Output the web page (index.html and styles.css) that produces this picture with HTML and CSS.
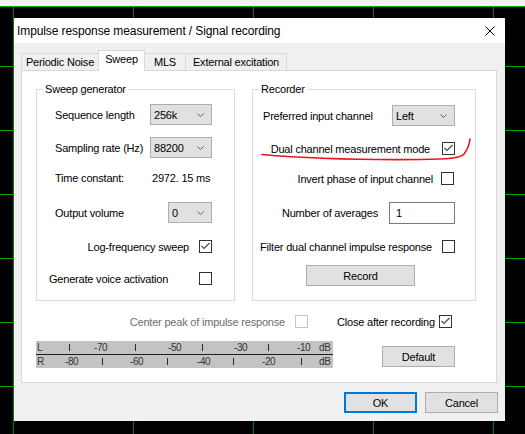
FILE: index.html
```html
<!DOCTYPE html>
<html>
<head>
<meta charset="utf-8">
<link rel="stylesheet" href="styles.css">
</head>
<body>
<div class="strip"></div>
<div class="desk">
  <div class="dialog">
    <div class="titlebar">
      <span class="title">Impulse response measurement / Signal recording</span>
      <svg class="close" width="10" height="10" viewBox="0 0 10 10"><path d="M0.5 0.5 L9.5 9.5 M9.5 0.5 L0.5 9.5" stroke="#000" stroke-width="1" fill="none"/></svg>
    </div>
    <div class="tabs">
      <div class="tab t1">Periodic Noise</div>
      <div class="tab sel t2">Sweep</div>
      <div class="tab t3">MLS</div>
      <div class="tab t4">External excitation</div>
    </div>
    <div class="panel">
      <div class="groups">
        <div class="group gen">
          <span class="legend">Sweep generator</span>
          <div class="row">
            <span>Sequence length</span>
            <div class="select w62"><span>256k</span><svg class="chev" width="7" height="4" viewBox="0 0 7 4"><polyline points="0.5,0.5 3.5,3.5 6.5,0.5" fill="none" stroke="#606060" stroke-width="1"/></svg></div>
          </div>
          <div class="row mt12">
            <span>Sampling rate (Hz)</span>
            <div class="select w62"><span>88200</span><svg class="chev" width="7" height="4" viewBox="0 0 7 4"><polyline points="0.5,0.5 3.5,3.5 6.5,0.5" fill="none" stroke="#606060" stroke-width="1"/></svg></div>
          </div>
          <div class="row mt9">
            <span>Time constant:</span>
            <span class="value">2972. 15 ms</span>
          </div>
          <div class="row mt14">
            <span>Output volume</span>
            <div class="select w44"><span>0</span><svg class="chev" width="7" height="4" viewBox="0 0 7 4"><polyline points="0.5,0.5 3.5,3.5 6.5,0.5" fill="none" stroke="#606060" stroke-width="1"/></svg></div>
          </div>
          <div class="row end mt13">
            <span>Log-frequency sweep</span>
            <span class="cb g10"><svg width="11" height="11" viewBox="0 0 11 11"><polyline points="1.5,5 4,7.5 9.5,2" fill="none" stroke="#444" stroke-width="1.1"/></svg></span>
          </div>
          <div class="row spread mt11 outdent">
            <span>Generate voice activation</span>
            <span class="cb"></span>
          </div>
        </div>
        <div class="group rec">
          <span class="legend">Recorder</span>
          <div class="row">
            <span>Preferred input channel</span>
            <div class="select w63"><span>Left</span><svg class="chev" width="7" height="4" viewBox="0 0 7 4"><polyline points="0.5,0.5 3.5,3.5 6.5,0.5" fill="none" stroke="#606060" stroke-width="1"/></svg></div>
          </div>
          <div class="row end mt12">
            <span>Dual channel measurement mode</span>
            <span class="cb g12"><svg width="11" height="11" viewBox="0 0 11 11"><polyline points="1.5,5 4,7.5 9.5,2" fill="none" stroke="#444" stroke-width="1.1"/></svg></span>
          </div>
          <div class="row end mt9">
            <span>Invert phase of input channel</span>
            <span class="cb g8 nudge"></span>
          </div>
          <div class="row end tall mt13">
            <span>Number of averages</span>
            <div class="num g11">1</div>
          </div>
          <div class="row end mt12">
            <span>Filter dual channel impulse response</span>
            <span class="cb g10"></span>
          </div>
          <div class="row mt8">
            <button class="btn record">Record</button>
          </div>
        </div>
      </div>
      <div class="bottomrow">
        <div class="centerpeak">
          <span>Center peak of impulse response</span>
          <span class="cb disabled g10"></span>
        </div>
        <div class="closeafter">
          <span>Close after recording</span>
          <span class="cb g4"><svg width="11" height="11" viewBox="0 0 11 11"><polyline points="1.5,5 4,7.5 9.5,2" fill="none" stroke="#444" stroke-width="1.1"/></svg></span>
        </div>
      </div>
      <div class="meterrow">
        <div class="meter">
          <div class="mrow">
            <span class="ml" style="left:1px">L</span>
            <span class="tick" style="left:33px"></span>
            <span class="ml" style="left:58px">-70</span>
            <span class="tick" style="left:99px"></span>
            <span class="ml" style="left:132px">-50</span>
            <span class="tick" style="left:166px"></span>
            <span class="ml" style="left:198px">-30</span>
            <span class="tick" style="left:232px"></span>
            <span class="ml" style="left:261px">-10</span>
            <span class="ml" style="left:283px">dB</span>
          </div>
          <div class="mrow">
            <span class="ml" style="left:1px">R</span>
            <span class="ml" style="left:29px">-80</span>
            <span class="tick" style="left:66px"></span>
            <span class="ml" style="left:94px">-60</span>
            <span class="tick" style="left:131px"></span>
            <span class="ml" style="left:161px">-40</span>
            <span class="tick" style="left:197px"></span>
            <span class="ml" style="left:226px">-20</span>
            <span class="tick" style="left:265px"></span>
            <span class="ml" style="left:283px">dB</span>
          </div>
        </div>
        <button class="btn default">Default</button>
      </div>
    </div>
    <div class="actions">
      <button class="btn ok">OK</button>
      <button class="btn cancel">Cancel</button>
    </div>
  </div>
</div>
<svg class="annot" width="525" height="434" viewBox="0 0 525 434">
  <path d="M262 154.5 C300 158 360 160 420 159.5 C448 159 460 158.5 464 154 C468 149 469.5 144 470 139" fill="none" stroke="#e8141a" stroke-width="1.6" stroke-linecap="round"/>
</svg>
</body>
</html>
```

FILE: styles.css
```css
html, body {
  margin: 0;
  padding: 0;
}

body {
  position: relative;
  width: 525px;
  height: 434px;
  overflow: hidden;
  background: #000;
  font-family: "Liberation Sans", Arial, sans-serif;
  font-size: 11px;
  letter-spacing: -0.2px;
  color: #000;
}

.strip {
  height: 6px;
  background: #f0f0f0;
}

.desk {
  height: 428px;
  box-sizing: border-box;
  padding: 12px 0 0 14px;
  background-color: #000;
  background-image:
    linear-gradient(#00a800, #00a800),
    linear-gradient(to bottom, #00a800 1px, transparent 1px),
    linear-gradient(to right, #0a780a 1px, transparent 1px);
  background-size: 100% 1px, 100% 64px, 120px 100%;
  background-position: 0 0, 0 60px, 13px 0;
  background-repeat: no-repeat, repeat, repeat;
}

.dialog {
  width: 491px;
  height: 403px;
  background: #f0f0f0;
  display: flex;
  flex-direction: column;
}

.titlebar {
  height: 25px;
  flex: none;
  box-sizing: border-box;
  background: #fff;
  display: flex;
  align-items: center;
  justify-content: space-between;
  padding: 0 10px 0 3px;
  font-size: 12px;
  letter-spacing: -0.1px;
}

.close {
  display: block;
}

.tabs {
  display: flex;
  align-items: flex-end;
  height: 20px;
  margin: 7px 0 0 7px;
}

.tab {
  box-sizing: border-box;
  height: 17px;
  border: 1px solid #d9d9d9;
  border-bottom: none;
  background: #f0f0f0;
  text-align: center;
  line-height: 16px;
  margin-left: -1px;
  white-space: nowrap;
}

.tab.t1 { margin-left: 0; width: 78px; }
.tab.t2 { width: 47px; }
.tab.t3 { width: 42px; }
.tab.t4 { width: 102px; }

.tab.sel {
  height: 21px;
  background: #fff;
  margin-bottom: -1px;
  line-height: 17px;
  position: relative;
  z-index: 1;
}

.panel {
  margin-left: 7px;
  width: 476px;
  height: 313px;
  box-sizing: border-box;
  border: 1px solid #d9d9d9;
  background: #fff;
  padding: 18px 0 0 14px;
}

.groups {
  display: flex;
  gap: 17px;
}

.group {
  position: relative;
  box-sizing: border-box;
  height: 212px;
  border: 1px solid #dcdcdc;
  display: flex;
  flex-direction: column;
}

.gen {
  width: 199px;
  padding: 14px 22px 0 18px;
}

.rec {
  width: 224px;
  padding: 15px 20px 0 10px;
}

.legend {
  position: absolute;
  top: -8px;
  left: 6px;
  padding: 0 2px;
  background: #fff;
  line-height: 14px;
}

.row {
  display: flex;
  align-items: center;
  height: 21px;
  white-space: nowrap;
}

.row.tall { height: 22px; }
.row.end { justify-content: flex-end; }
.row.spread { justify-content: space-between; }
.row.outdent { margin-left: -6px; }

.mt8 { margin-top: 8px; }
.mt9 { margin-top: 9px; }
.mt11 { margin-top: 11px; }
.mt12 { margin-top: 12px; }
.mt13 { margin-top: 13px; }
.mt14 { margin-top: 14px; }

.g4 { margin-left: 4px; }
.g8 { margin-left: 8px; }
.g10 { margin-left: 10px; }
.g11 { margin-left: 11px; }
.g12 { margin-left: 12px; }
.nudge { margin-right: 1px; }

.select {
  box-sizing: border-box;
  height: 21px;
  margin-left: auto;
  border: 1px solid #adadad;
  background: #e1e1e1;
  display: flex;
  align-items: center;
  justify-content: space-between;
  padding: 0 7px 0 3px;
}

.w62 { width: 62px; }
.w63 { width: 63px; }
.w44 { width: 44px; }

.chev {
  display: block;
  margin-top: 1px;
}

.value {
  margin-left: auto;
  width: 62px;
  box-sizing: border-box;
  padding-left: 2px;
}

.cb {
  flex: none;
  box-sizing: border-box;
  width: 13px;
  height: 13px;
  border: 1px solid #333;
  background: #fff;
  display: block;
}

.cb svg {
  display: block;
}

.cb.disabled {
  border-color: #c4c4c4;
}

.num {
  box-sizing: border-box;
  width: 66px;
  height: 22px;
  border: 1px solid #7a7a7a;
  background: #fff;
  padding-left: 6px;
  display: flex;
  align-items: center;
}

.btn {
  box-sizing: border-box;
  height: 21px;
  padding: 0;
  margin: 0;
  border: 1px solid #adadad;
  background: #e1e1e1;
  color: #000;
  font: inherit;
  letter-spacing: inherit;
  text-align: center;
}

.record {
  width: 109px;
  margin-left: 43px;
}

.bottomrow {
  display: flex;
  align-items: center;
  height: 13px;
  margin-top: 14px;
  white-space: nowrap;
}

.centerpeak {
  width: 272px;
  display: flex;
  justify-content: flex-end;
  align-items: center;
  color: #6d6d6d;
}

.closeafter {
  margin-left: 29px;
  display: flex;
  align-items: center;
}

.meterrow {
  display: flex;
  align-items: flex-start;
  margin-top: 13px;
}

.meter {
  width: 297px;
  height: 27px;
  background: #c3c3c3;
}

.mrow {
  position: relative;
  height: 13px;
}

.mrow + .mrow {
  border-top: 1px solid #1e1e1e;
}

.ml {
  position: absolute;
  top: 0;
  line-height: 13px;
  font-size: 10px;
  letter-spacing: -0.4px;
  color: #333;
}

.tick {
  position: absolute;
  top: 3px;
  width: 1px;
  height: 7px;
  background: #2a2a2a;
}

.default {
  width: 73px;
  margin: 5px 0 0 49px;
}

.actions {
  display: flex;
  justify-content: flex-end;
  gap: 8px;
  padding: 9px 7px 0 0;
}

.ok {
  width: 73px;
  border: 2px solid #0078d7;
}

.cancel {
  width: 73px;
}

.annot {
  position: absolute;
  left: 0;
  top: 0;
  pointer-events: none;
}
```
